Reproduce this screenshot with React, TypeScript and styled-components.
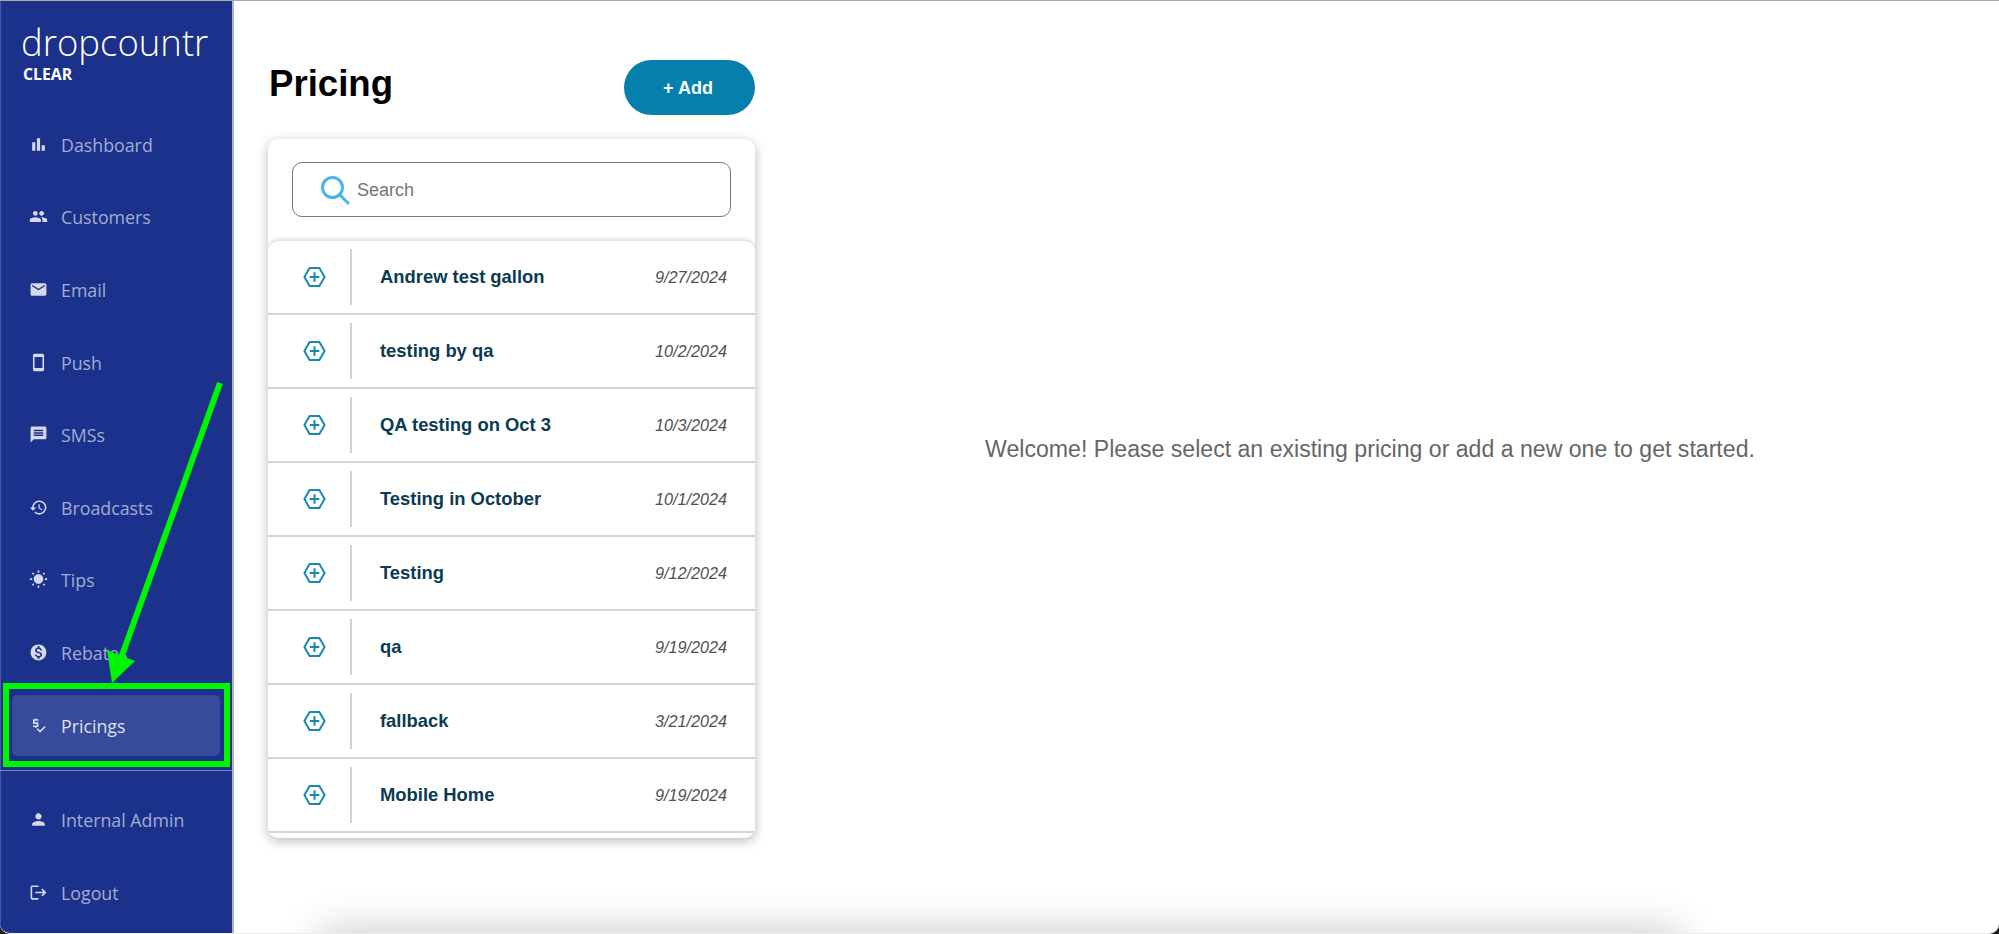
import React, { FC } from "react";
import styled, { createGlobalStyle } from "styled-components";
import { IconType } from "react-icons";
import {
  MdBarChart,
  MdPeople,
  MdEmail,
  MdStayPrimaryPortrait,
  MdMessage,
  MdHistory,
  MdWbSunny,
  MdMonetizationOn,
  MdPriceCheck,
  MdPerson,
  MdLogout
} from "react-icons/md";

type NavEntry = { label: string; icon: IconType; active?: boolean };
type Pricing = { name: string; date: string };

const mainNav: NavEntry[] = [
  { label: "Dashboard", icon: MdBarChart },
  { label: "Customers", icon: MdPeople },
  { label: "Email", icon: MdEmail },
  { label: "Push", icon: MdStayPrimaryPortrait },
  { label: "SMSs", icon: MdMessage },
  { label: "Broadcasts", icon: MdHistory },
  { label: "Tips", icon: MdWbSunny },
  { label: "Rebates", icon: MdMonetizationOn },
  { label: "Pricings", icon: MdPriceCheck, active: true }
];

const bottomNav: NavEntry[] = [
  { label: "Internal Admin", icon: MdPerson },
  { label: "Logout", icon: MdLogout }
];

const pricings: Pricing[] = [
  { name: "Andrew test gallon", date: "9/27/2024" },
  { name: "testing by qa", date: "10/2/2024" },
  { name: "QA testing on Oct 3", date: "10/3/2024" },
  { name: "Testing in October", date: "10/1/2024" },
  { name: "Testing", date: "9/12/2024" },
  { name: "qa", date: "9/19/2024" },
  { name: "fallback", date: "3/21/2024" },
  { name: "Mobile Home", date: "9/19/2024" }
];

const GlobalStyle = createGlobalStyle`
  html, body {
    margin: 0;
    padding: 0;
    background: #1a1a1a;
    overflow: hidden;
  }
  * {
    box-sizing: border-box;
  }
`;

const Page = styled.div`
  position: relative;
  display: flex;
  width: 1999px;
  height: 934px;
  overflow: hidden;
  border-radius: 0 0 10px 10px;
  background: #fff;
  border-top: 1px solid #a9a9a9;
  border-bottom: 1px solid #ececec;
`;

const Sidebar = styled.aside`
  flex: 0 0 234px;
  display: flex;
  flex-direction: column;
  background: #1b318c;
  border-right: 2px solid #b5b5b8;
  box-shadow: inset 1px 0 0 #46599f;
  font-family: "Open Sans", sans-serif;
`;

const Brand = styled.div`
  height: 107px;
  padding: 18px 0 0 21px;
  color: #fff;
`;

const BrandName = styled.div`
  font-size: 36.5px;
  font-weight: 300;
  line-height: 46px;
`;

const BrandTag = styled.div`
  font-size: 15.8px;
  font-weight: 700;
  line-height: 16px;
  margin-left: 2px;
  margin-top: 1px;
`;

const NavItem = styled.div<{ $active?: boolean }>`
  position: relative;
  height: 72.6px;
  display: flex;
  align-items: center;
  padding-left: 29px;
  gap: 13px;
  font-size: 17.8px;
  color: ${p => (p.$active ? "rgba(255,255,255,0.85)" : "rgba(255,255,255,0.6)")};

  svg {
    flex: 0 0 19px;
    width: 19px;
    height: 19px;
    color: rgba(255, 255, 255, 0.82);
  }

  span {
    padding-top: 1px;
  }

  ${p =>
    p.$active &&
    `
    &::before {
      content: "";
      position: absolute;
      left: 12px;
      width: 208px;
      top: 6px;
      height: 61px;
      border-radius: 5px;
      background: rgba(255, 255, 255, 0.13);
    }
    & > * {
      position: relative;
    }
  `}
`;

const Highlight = styled.div`
  position: absolute;
  left: 3px;
  top: -6px;
  width: 227px;
  height: 84px;
  border: 6px solid #00f500;
`;

const NavDivider = styled.div`
  height: 1px;
  margin: 9px 0 12px;
  background: rgba(255, 255, 255, 0.4);
`;

const Main = styled.main`
  flex: 1;
  display: flex;
  min-width: 0;
`;

const ListColumn = styled.section`
  flex: 0 0 487px;
  margin-left: 34px;
  display: flex;
  flex-direction: column;
  font-family: "Liberation Sans", Arial, sans-serif;
`;

const Header = styled.div`
  height: 138px;
  padding-top: 59px;
  display: flex;
  justify-content: space-between;
  align-items: flex-start;
`;

const Title = styled.h1`
  margin: 1px 0 0 1px;
  font-size: 36.6px;
  line-height: 46px;
  font-weight: 700;
  color: #000;
`;

const AddButton = styled.button`
  width: 131px;
  height: 55px;
  padding: 2px 3px 0 0;
  border: 0;
  border-radius: 28px;
  background: #0580ad;
  color: #fff;
  font-family: inherit;
  font-size: 18px;
  font-weight: 700;
`;

const Card = styled.div`
  height: 699px;
  border-radius: 10px;
  background: #fff;
  overflow: hidden;
  box-shadow: 0 3px 12px rgba(0, 0, 0, 0.28);
`;

const SearchArea = styled.div`
  height: 102px;
  padding: 23px 24px 0;
`;

const SearchBox = styled.div`
  height: 55px;
  display: flex;
  align-items: center;
  gap: 7px;
  padding-left: 27px;
  border: 1px solid #77777a;
  border-radius: 10px;
  font-size: 18px;
  color: #757575;
`;

const SearchText = styled.span`
  margin-top: 2px;
`;

const List = styled.div`
  height: 100%;
  border-radius: 10px 10px 0 0;
  box-shadow: 0 -1px 5px rgba(0, 0, 0, 0.2);
`;

const Row = styled.div`
  height: 74px;
  display: flex;
  align-items: center;
  border-bottom: 2px solid #d4d4d4;
`;

const RowIcon = styled.div`
  flex: 0 0 84px;
  height: 56px;
  display: flex;
  align-items: center;
  justify-content: center;
  padding-left: 10px;
  border-right: 2px solid #d2d2d2;
`;

const RowName = styled.div`
  flex: 1;
  padding-left: 28px;
  font-size: 18.4px;
  font-weight: 700;
  color: #0a3b52;
`;

const RowDate = styled.div`
  padding-right: 28px;
  font-size: 16.2px;
  font-style: italic;
  color: #505050;
`;

const Welcome = styled.div`
  flex: 1;
  display: flex;
  justify-content: center;
  padding-top: 433px;
  padding-right: 14px;
  font-family: "Liberation Sans", Arial, sans-serif;
  font-size: 23.1px;
  line-height: 30px;
  color: #666;
`;

const FooterShadow = styled.div`
  position: absolute;
  left: 320px;
  right: 319px;
  bottom: -30px;
  height: 30px;
  box-shadow: 0 0 40px 0 rgba(0, 0, 0, 0.26);
`;

const Annotation = styled.svg`
  position: absolute;
  left: 0;
  top: 0;
  pointer-events: none;
`;

const HexPlus: FC = () => (
  <svg width="23" height="20" viewBox="0 0 23 20" fill="none" stroke="#1688b4" strokeWidth="2">
    <path d="M6.6 1h9.8l5.2 9-5.2 9H6.6l-5.2-9z" strokeLinejoin="round" />
    <path d="M11.5 5.2v9.6M6.7 10h9.6" />
  </svg>
);

const SearchIcon: FC = () => (
  <svg width="30" height="30" viewBox="0 0 30 30" fill="none" stroke="#4ab4e6" strokeWidth="3">
    <circle cx="12.5" cy="12.5" r="10" />
    <path d="M19.5 19.5L28 28" strokeLinecap="round" />
  </svg>
);

const Nav: FC<{ entry: NavEntry }> = ({ entry }) => {
  const Icon = entry.icon;
  return (
    <NavItem $active={entry.active}>
      <Icon />
      <span>{entry.label}</span>
      {entry.active && <Highlight />}
    </NavItem>
  );
};

const App: FC = () => (
  <Page>
    <GlobalStyle />
    <Sidebar>
      <Brand>
        <BrandName>dropcountr</BrandName>
        <BrandTag>CLEAR</BrandTag>
      </Brand>
      {mainNav.map(entry => (
        <Nav key={entry.label} entry={entry} />
      ))}
      <NavDivider />
      {bottomNav.map(entry => (
        <Nav key={entry.label} entry={entry} />
      ))}
    </Sidebar>
    <Main>
      <ListColumn>
        <Header>
          <Title>Pricing</Title>
          <AddButton>+ Add</AddButton>
        </Header>
        <Card>
          <SearchArea>
            <SearchBox>
              <SearchIcon />
              <SearchText>Search</SearchText>
            </SearchBox>
          </SearchArea>
          <List>
            {pricings.map(pricing => (
              <Row key={pricing.name}>
                <RowIcon>
                  <HexPlus />
                </RowIcon>
                <RowName>{pricing.name}</RowName>
                <RowDate>{pricing.date}</RowDate>
              </Row>
            ))}
          </List>
        </Card>
      </ListColumn>
      <Welcome>Welcome! Please select an existing pricing or add a new one to get started.</Welcome>
    </Main>
    <FooterShadow />
    <Annotation width="240" height="700" viewBox="0 0 240 700">
      <path d="M220 382L120 660" stroke="#00f500" strokeWidth="6" />
      <path d="M107 649L135 660L112 682Z" fill="#00f500" />
    </Annotation>
  </Page>
);

export default App;
